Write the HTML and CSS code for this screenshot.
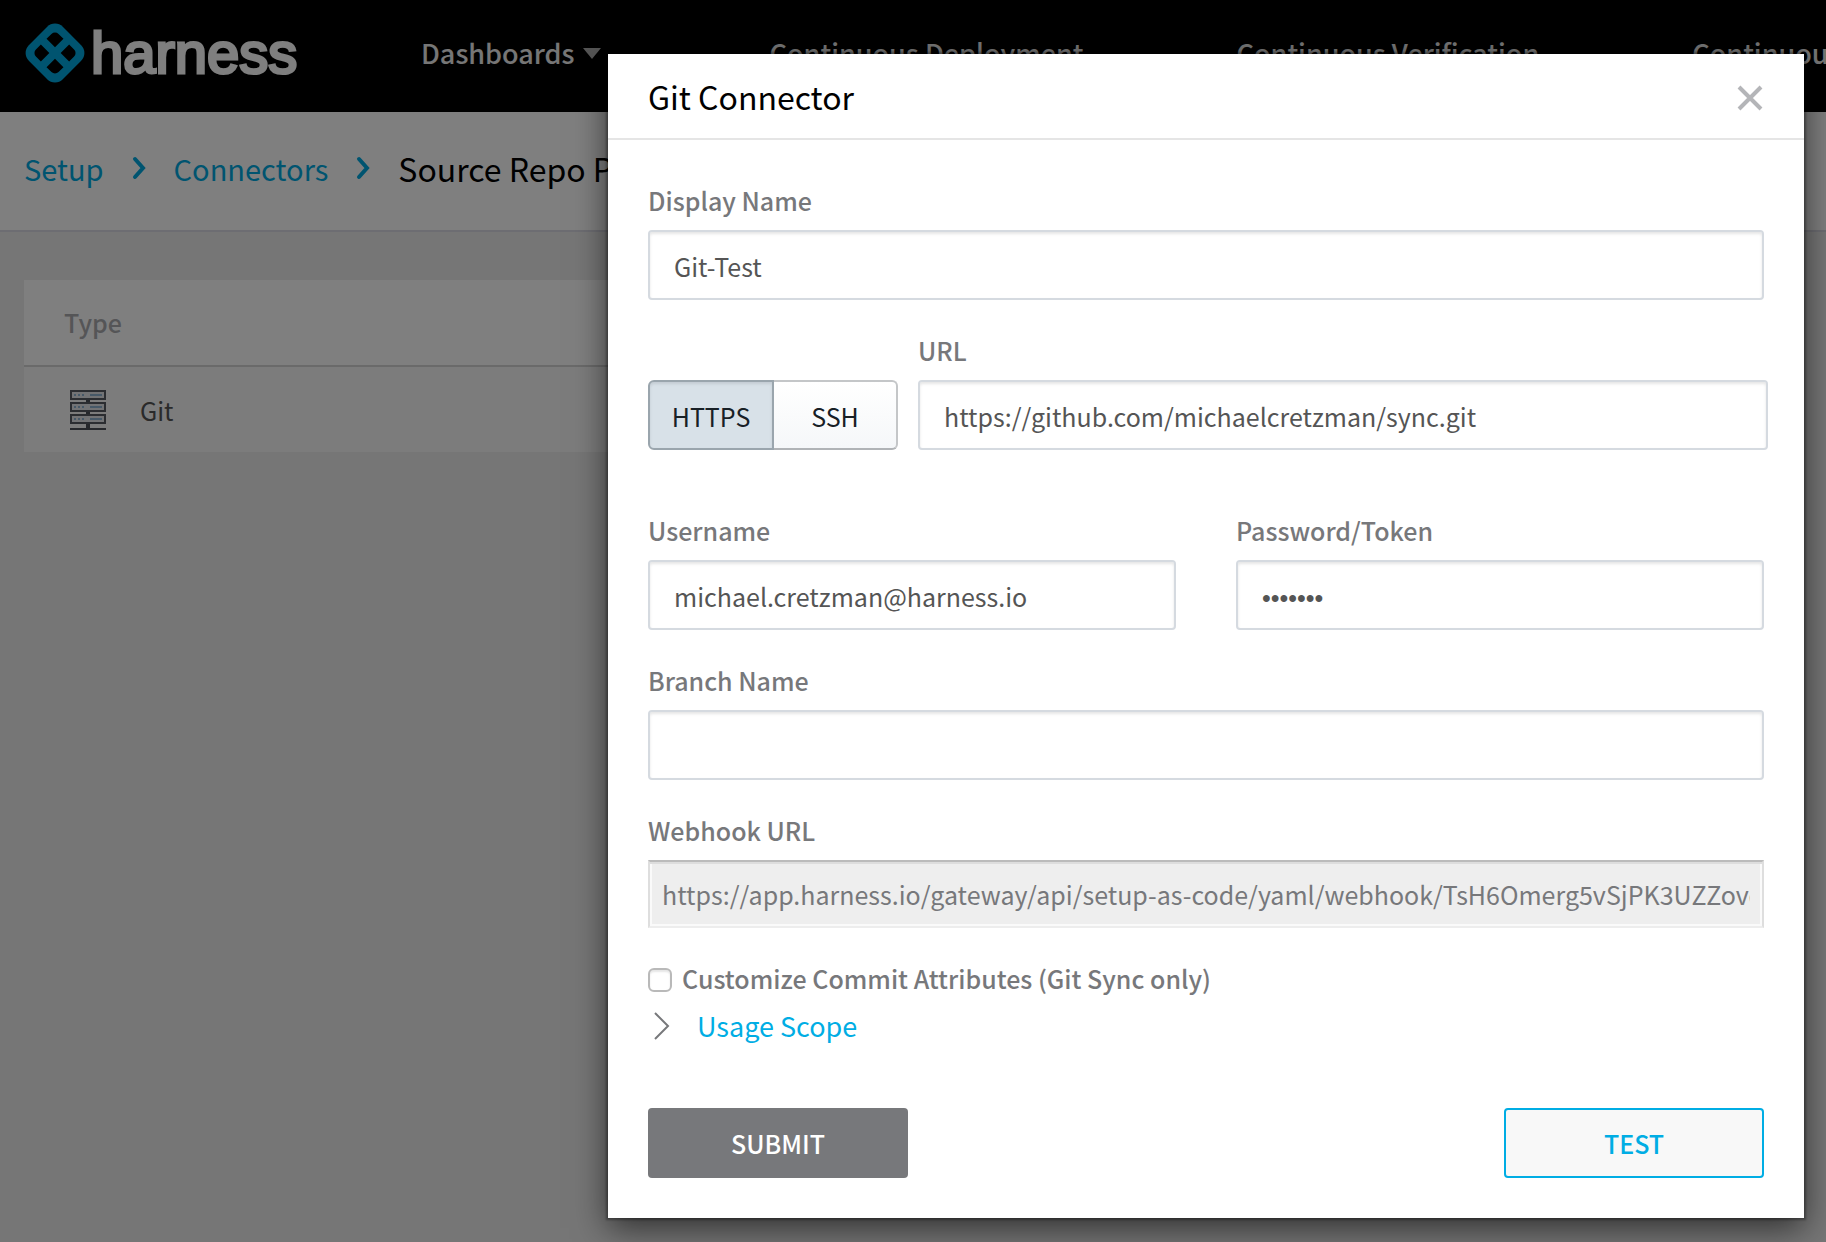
FILE: index.html
```html
<!DOCTYPE html>
<html lang="en">
<head>
<meta charset="utf-8">
<title>Git Connector</title>
<link rel="stylesheet" href="styles.css">
</head>
<body>
<div class="page">
  <header class="topbar">
    <a class="logo" href="#">
      <svg class="logo-mark" viewBox="0 0 60 60" aria-hidden="true">
        <g transform="translate(30 30) rotate(45)">
          <rect x="-24" y="-24" width="48" height="48" rx="11" fill="#00a9e0"/>
          <g fill="#000">
            <path d="M-11-16h7v12h-12v-7a5 5 0 0 1 5-5z"/>
            <path d="M4-16h7a5 5 0 0 1 5 5v7H4z"/>
            <path d="M-16 4h12v12h-7a5 5 0 0 1-5-5z"/>
            <path d="M4 4h12v7a5 5 0 0 1-5 5H4z"/>
          </g>
        </g>
      </svg>
      <span class="logo-text">harness</span>
    </a>
    <nav class="nav">
      <a class="nav-item nav-item-menu" href="#">Dashboards <span class="caret"></span></a>
      <a class="nav-item" href="#">Continuous Deployment</a>
      <a class="nav-item" href="#">Continuous Verification</a>
      <a class="nav-item" href="#">Continuous Security</a>
    </nav>
  </header>
  <nav class="crumbs" aria-label="Breadcrumb">
    <a href="#">Setup</a>
    <svg class="crumb-sep" viewBox="0 0 14 24" aria-hidden="true"><path d="M3 3l8 9-8 9"/></svg>
    <a href="#">Connectors</a>
    <svg class="crumb-sep" viewBox="0 0 14 24" aria-hidden="true"><path d="M3 3l8 9-8 9"/></svg>
    <span class="crumb-current">Source Repo Providers</span>
  </nav>
  <main class="content">
    <table class="list">
      <thead><tr><th>Type</th></tr></thead>
      <tbody><tr><td>
        <div class="type-cell">
          <svg class="server" viewBox="0 0 38 42" aria-hidden="true">
            <g fill="#4c5058"><path d="M17 11h4v4h-4zM17 23h4v4h-4zM17 35h4v4h-4zM1 39h36v2H1z"/></g>
            <g fill="#e4e6ea" stroke="#565a62" stroke-width="2"><rect x="2" y="2" width="34" height="8"/><rect x="2" y="14" width="34" height="8"/><rect x="2" y="26" width="34" height="8"/></g>
            <g fill="#8fb2d0"><path d="M5 5h2v2H5zM9 5h2v2H9zM13 5h2v2h-2zM21 5h12v2H21zM5 17h2v2H5zM9 17h2v2H9zM13 17h2v2h-2zM21 17h12v2H21zM5 29h2v2H5zM9 29h2v2H9zM13 29h2v2h-2zM21 29h12v2H21z"/></g>
          </svg>
          <span>Git</span>
        </div>
      </td></tr></tbody>
    </table>
  </main>
</div>

<div class="backdrop">
  <section class="modal" role="dialog" aria-labelledby="modal-title">
    <header class="modal-head">
      <h1 id="modal-title">Git Connector</h1>
      <button class="close" type="button" aria-label="Close">
        <svg viewBox="0 0 28 28" aria-hidden="true"><path d="M3 3l22 22M25 3L3 25"/></svg>
      </button>
    </header>
    <form class="modal-body">
      <div class="field">
        <label for="name">Display Name</label>
        <input class="text" id="name" type="text" value="Git-Test">
      </div>
      <div class="row row-url">
        <div class="toggle">
          <button class="toggle-btn active" type="button" aria-pressed="true">HTTPS</button>
          <button class="toggle-btn" type="button" aria-pressed="false">SSH</button>
        </div>
        <div class="field field-url">
          <label for="url">URL</label>
          <input class="text" id="url" type="text" value="https://github.com/michaelcretzman/sync.git">
        </div>
      </div>
      <div class="row row-login">
        <div class="field">
          <label for="user">Username</label>
          <input class="text" id="user" type="text" value="michael.cretzman@harness.io">
        </div>
        <div class="field">
          <label for="pass">Password/Token</label>
          <input class="text password" id="pass" type="password" value="secret7">
        </div>
      </div>
      <div class="field">
        <label for="branch">Branch Name</label>
        <input class="text" id="branch" type="text">
      </div>
      <div class="field">
        <label for="hook">Webhook URL</label>
        <input class="text hook" id="hook" type="text" readonly value="https://app.harness.io/gateway/api/setup-as-code/yaml/webhook/TsH6Omerg5vSjPK3UZZovq8Rk2">
      </div>
      <div class="check">
        <input id="custom" type="checkbox">
        <label for="custom">Customize Commit Attributes (Git Sync only)</label>
      </div>
      <a class="scope" href="#">
        <svg viewBox="0 0 20 30" aria-hidden="true"><path d="M3 2l13 13L3 28"/></svg>
        <span>Usage Scope</span>
      </a>
      <div class="actions">
        <button class="btn btn-submit" type="submit">SUBMIT</button>
        <button class="btn btn-test" type="button">TEST</button>
      </div>
    </form>
  </section>
</div>
</body>
</html>
```
FILE: styles.css
```css
* { box-sizing: border-box; }

body {
  margin: 0;
  background: #ececec;
  color: #555;
  font-family: "Noto Sans CJK SC", "Noto Sans", sans-serif;
  font-size: 25px;
  line-height: 40px;
}

a { text-decoration: none; }
button, input { font: inherit; }

.page { min-height: 100vh; overflow: hidden; }

/* Top bar */
.topbar {
  display: flex;
  align-items: center;
  height: 112px;
  padding: 0 0 6px 25px;
  background: #000;
  white-space: nowrap;
}
.logo {
  display: flex;
  align-items: center;
  gap: 6px;
  width: 396px;
  flex: none;
  color: #fff;
}
.logo-mark { width: 60px; height: 60px; }
.logo-text {
  font: 58px/60px "Liberation Sans", Arial, sans-serif;
  -webkit-text-stroke: 3px currentColor;
}
.nav { display: flex; gap: 153px; font-size: 27px; }
.nav-item { color: #ededed; font-weight: 500; }
.nav-item-menu { display: flex; align-items: center; gap: 8px; padding-right: 16px; }
.caret {
  border: 9px solid transparent;
  border-top: 11px solid #aaa;
  border-bottom: 0;
}

/* Breadcrumb */
.crumbs {
  display: flex;
  align-items: center;
  height: 120px;
  padding: 0 24px 6px;
  background: #fff;
  border-bottom: 2px solid #dadbe4;
  font-size: 29px;
  white-space: nowrap;
}
.crumbs a { color: #00a9e0; }
.crumb-sep {
  width: 14px;
  height: 24px;
  margin: 0 28px;
  fill: none;
  stroke: #00a9e0;
  stroke-width: 4;
  stroke-linecap: round;
}
.crumb-current { color: #000; font-size: 32px; }

/* Connector list */
.content { padding: 48px 24px; }
.list { width: 100%; border-collapse: collapse; background: #fff; }
.list th {
  height: 86px;
  padding: 0 40px 2px;
  border-bottom: 2px solid #d4d4d4;
  color: #aaabae;
  font-weight: 500;
  text-align: left;
}
.list td { height: 86px; padding: 0 45px; background: #f8f8f8; }
.type-cell { display: flex; align-items: center; gap: 33px; }
.server { width: 38px; height: 42px; }

/* Modal */
.backdrop {
  position: absolute;
  inset: 0;
  min-height: 100%;
  padding: 54px 22px 24px 608px;
  background: rgba(0, 0, 0, .5);
}
.modal {
  background: #fff;
  box-shadow: 0 0 2px 2px rgba(0, 0, 0, .3), 0 10px 32px rgba(0, 0, 0, .6);
}
.modal-head {
  display: flex;
  align-items: center;
  justify-content: space-between;
  height: 86px;
  padding: 0 40px;
  border-bottom: 2px solid #e5e5e5;
}
.modal-head h1 { margin: 0; color: #000; font-size: 32px; font-weight: 400; }
.close { width: 28px; height: 32px; padding: 4px 0 0; border: 0; background: none; }
.close svg { display: block; fill: none; stroke: #b4b5b8; stroke-width: 4; }

.modal-body { padding: 40px; }
.field { margin-bottom: 30px; }
.field label { display: block; margin-bottom: 10px; }
label { color: #77787b; font-weight: 500; }
.text {
  display: block;
  width: 100%;
  height: 70px;
  padding: 2px 24px 0;
  border: 2px solid #d5dae0;
  border-radius: 4px;
  background: #fff;
  box-shadow: inset 0 2px 3px rgba(0, 0, 0, .1);
  color: #555;
  outline: 0;
}
.password { padding-top: 6px; font-family: "Liberation Sans", Arial, sans-serif; }
.row { display: flex; }
.row-url { align-items: flex-end; gap: 20px; margin: 0 -4px 60px 0; }
.field-url { flex: 1; margin: 0; }
.row-login { gap: 60px; }
.row-login .field { flex: 1; }

.toggle { display: flex; width: 250px; }
.toggle-btn {
  flex: 1;
  height: 70px;
  padding: 2px 0 0;
  border: 2px solid #c4c6c8;
  border-bottom-color: #b0b3b6;
  border-left: 0;
  border-radius: 0 6px 6px 0;
  background: linear-gradient(#fff, #f5f7f9);
  color: #182026;
}
.toggle-btn.active {
  border: 2px solid #9aa5ad;
  border-radius: 6px 0 0 6px;
  background: #d8e1e8;
  box-shadow: inset 0 2px 3px rgba(16, 22, 26, .1);
}

.hook {
  height: 68px;
  padding: 0 12px;
  border-color: #bbb #dedede #ededed;
  border-radius: 0;
  background: #eee;
  box-shadow: inset 0 2px #ddd, inset 0 0 0 2px #fafafa;
  color: #77787b;
}

.check { display: flex; align-items: center; gap: 10px; }
.check input {
  appearance: none;
  width: 24px;
  height: 24px;
  margin: 4px 0 0;
  border: 2px solid #b9b9b9;
  border-radius: 6px;
  background: #fff;
  box-shadow: inset 0 2px 2px rgba(0, 0, 0, .1);
}
.scope { display: flex; align-items: center; gap: 25px; margin-top: 8px; padding-left: 4px; color: #00ade4; font-size: 27px; }
.scope svg { width: 20px; height: 30px; fill: none; stroke: #77787b; stroke-width: 2; }

.actions { display: flex; justify-content: space-between; margin-top: 62px; }
.btn { width: 260px; height: 70px; border-radius: 4px; font-weight: 500; }
.btn-submit { border: 0; background: #77787b; color: #fff; }
.btn-test { border: 2px solid #00ade4; background: #f8f8f8; color: #00ade4; }
```
